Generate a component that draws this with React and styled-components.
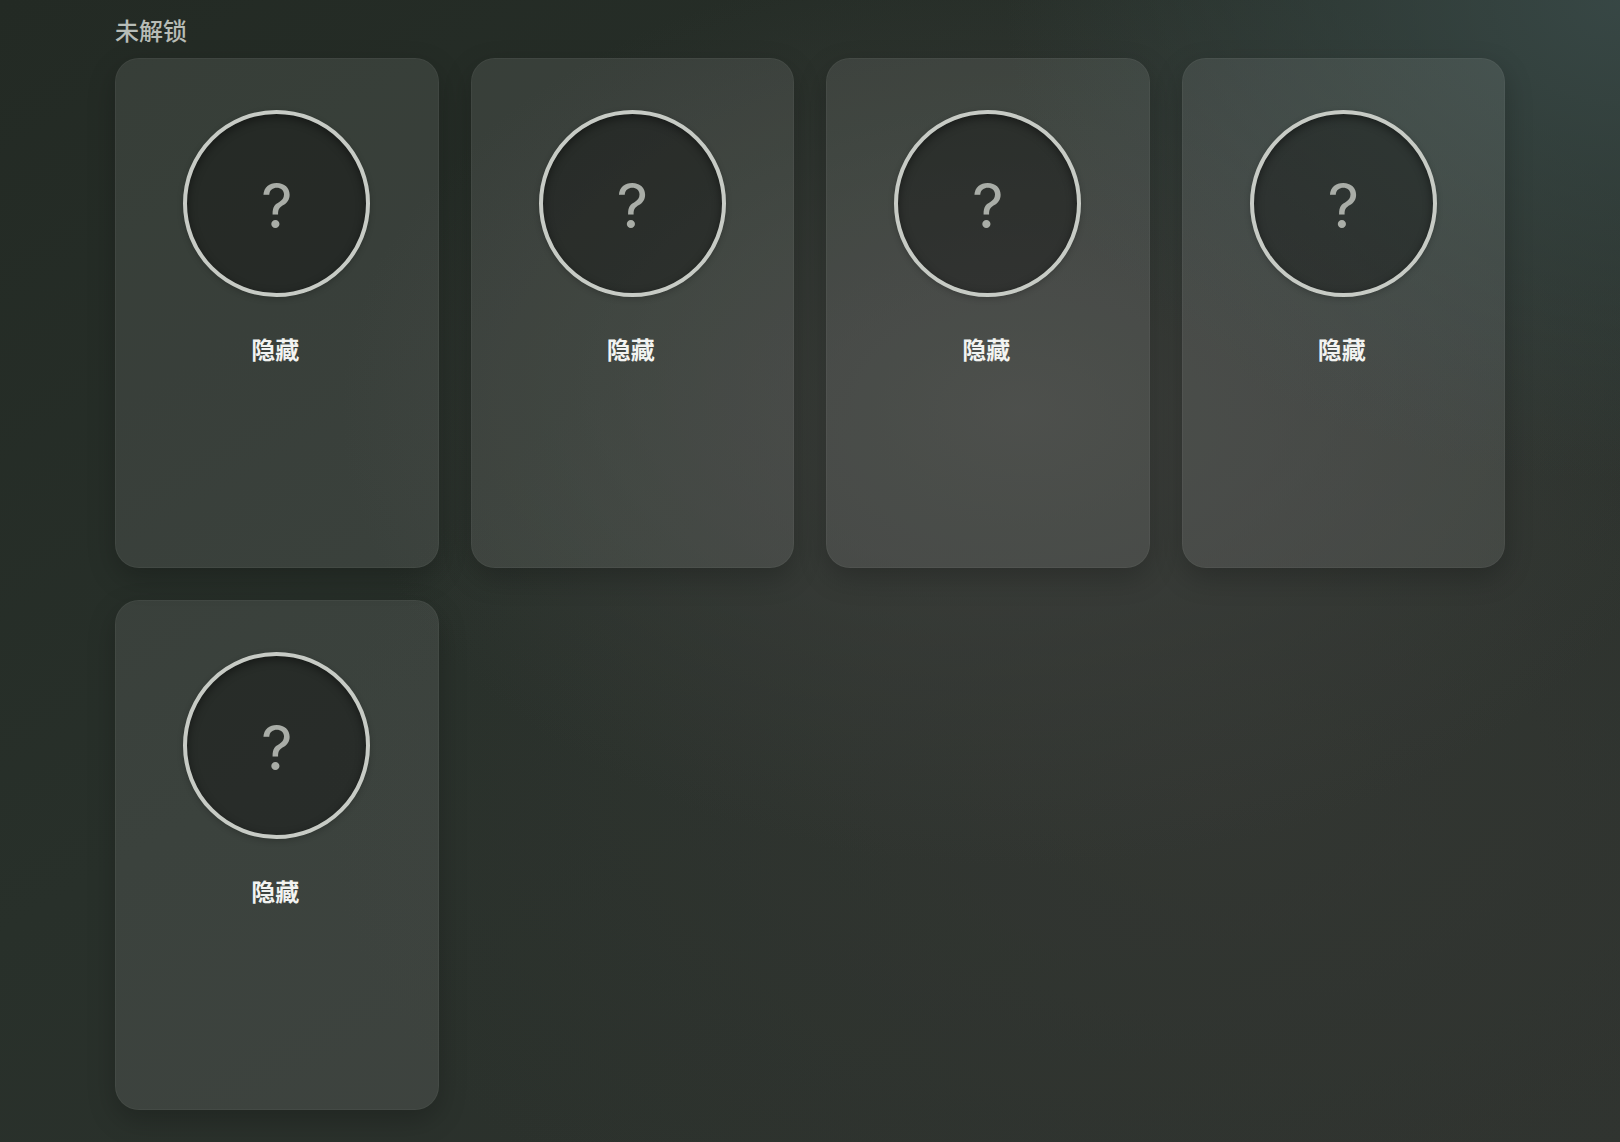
import React from "react";
import styled, { createGlobalStyle } from "styled-components";

const GlobalStyle = createGlobalStyle`
  html, body {
    margin: 0;
    padding: 0;
    min-height: 100%;
  }
  body {
    font-family: Inter, "Noto Sans", "Noto Sans CJK SC", sans-serif;
    background: #262d28;
  }
`;

const Page = styled.div`
  min-height: 1142px;
  box-sizing: border-box;
  padding: 13px 0 32px;
  background:
    radial-gradient(ellipse 38% 42% at 100% 0%, rgba(56, 72, 70, 0.95) 0%, rgba(56, 72, 70, 0) 100%),
    radial-gradient(ellipse 42% 40% at 63% 36%, rgba(62, 64, 61, 0.9) 0%, rgba(62, 64, 61, 0) 100%),
    radial-gradient(ellipse 55% 50% at 75% 70%, rgba(52, 55, 51, 0.8) 0%, rgba(52, 55, 51, 0) 100%),
    linear-gradient(150deg, #232a24 0%, #28302a 45%, #2f332f 100%);
`;

const Container = styled.div`
  width: 1390px;
  margin: 0 auto;
`;

const SectionTitle = styled.h2`
  margin: 0 0 11px;
  font-family: "Noto Sans CJK SC", "Noto Sans", sans-serif;
  font-size: 24px;
  line-height: 34px;
  font-weight: 500;
  color: #b8bdb7;
`;

const Grid = styled.div`
  display: grid;
  grid-template-columns: repeat(4, 1fr);
  gap: 32px;
`;

const Card = styled.div`
  height: 510px;
  box-sizing: border-box;
  border-radius: 24px;
  background: rgba(255, 255, 255, 0.09);
  border: 1px solid rgba(255, 255, 255, 0.04);
  box-shadow: 0 10px 28px rgba(0, 0, 0, 0.22);
  display: flex;
  flex-direction: column;
  align-items: center;
  padding-top: 51px;
`;

const Badge = styled.div`
  width: 187px;
  height: 187px;
  box-sizing: border-box;
  border-radius: 50%;
  border: 4px solid #c7cbc5;
  background: rgba(0, 0, 0, 0.32);
  box-shadow: inset 0 3px 10px rgba(0, 0, 0, 0.45), 0 2px 6px rgba(0, 0, 0, 0.2);
  display: flex;
  align-items: center;
  justify-content: center;
`;

const Mark = styled.span`
  font-family: Inter, "Liberation Sans", sans-serif;
  font-weight: 400;
  font-size: 62px;
  line-height: 1;
  color: #a9ada7;
  transform: translateY(2px);
`;

const Name = styled.div`
  margin-top: 35px;
  margin-right: 3px;
  font-family: "Noto Sans CJK SC", "Noto Sans", sans-serif;
  font-size: 24px;
  line-height: 34px;
  font-weight: 700;
  color: #f2f3f1;
`;

const items = [1, 2, 3, 4, 5];

export default function App() {
  return (
    <>
      <GlobalStyle />
      <Page>
        <Container>
          <SectionTitle>未解锁</SectionTitle>
          <Grid>
            {items.map((i) => (
              <Card key={i}>
                <Badge>
                  <Mark>?</Mark>
                </Badge>
                <Name>隐藏</Name>
              </Card>
            ))}
          </Grid>
        </Container>
      </Page>
    </>
  );
}
